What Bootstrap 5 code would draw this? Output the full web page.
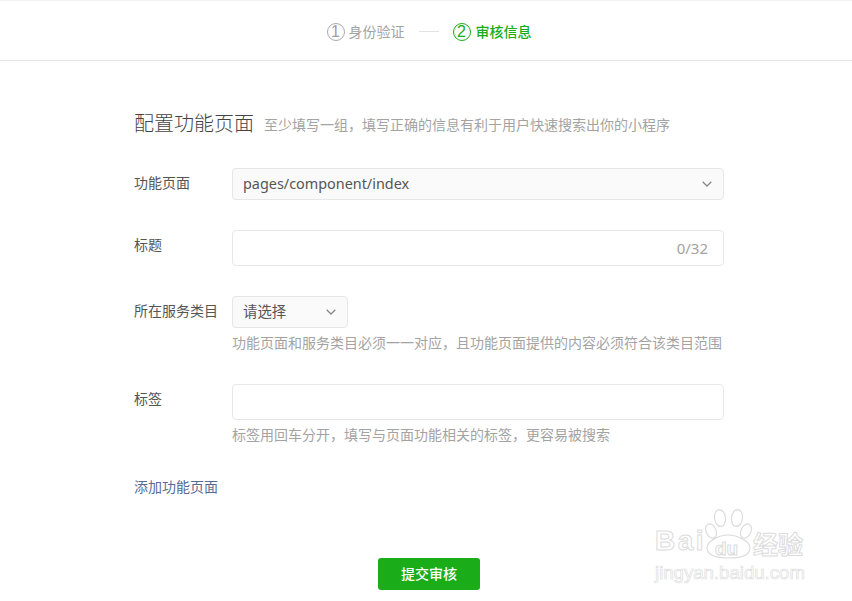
<!DOCTYPE html>
<html lang="zh-CN">
<head>
<meta charset="utf-8">
<title>配置功能页面</title>
<link rel="stylesheet" href="https://cdn.jsdelivr.net/npm/bootstrap@5.3.0/dist/css/bootstrap.min.css">
<style>
html,body{height:601px;overflow:hidden}
body{font-family:"Noto Sans","Noto Sans CJK SC",sans-serif;font-size:14px;color:#353535;background:#fff;position:relative}
.top-head{height:61px;border-top:1px solid #f2f2f2;border-bottom:1px solid #e7e7e7;padding-left:6px;padding-top:2px}
.step-no{width:18px;height:18px;border:1px solid #a9a9a9;border-radius:50%;font-size:16px;line-height:16px;text-align:center;color:#a0a0a0;margin-right:4px;font-family:"Liberation Sans",sans-serif}
.step-txt{color:#a3a3a3;font-size:14px;line-height:18px}
.step-line{width:20px;height:1px;background:#e2e2e2;margin:0 14px}
.step-on .step-no{border-color:#1aad19;color:#1aad19;margin-right:5px}
.step-on .step-txt{color:#1aad19;font-weight:500}
.page-wrap{width:590px;margin-left:134px}
.page-title{margin:0;padding-top:49px;height:107px;display:flex;align-items:flex-start;line-height:28px}
.page-title b{font-weight:300;font-size:20px;color:#444;margin-right:10px}
.page-title span{font-size:14px;font-weight:400;color:#a3a3a3;margin-top:1px}
.field-row{display:flex}
.field-name{width:98px;flex:none;line-height:20px;color:#555;font-size:14px}
.field-main{flex:1;min-width:0}
.pick,.entry{border:1px solid #e7e7e7;border-radius:4px;font-size:14px;color:#353535;box-shadow:none}
.pick.form-select{height:32px;padding:0 30px 0 10px;background-color:#fafafa;font-size:14.4px;line-height:30px;color:#555;font-family:"Noto Sans","Noto Sans CJK SC",sans-serif;background-size:10px 6px;background-position:right 11px center;background-image:url("data:image/svg+xml,%3Csvg xmlns='http://www.w3.org/2000/svg' viewBox='0 0 10 6'%3E%3Cpath d='M.7.7 5 5 9.3.7' fill='none' stroke='%23888' stroke-width='1.3'/%3E%3C/svg%3E")}
.pick-small{width:116px}
.entry.form-control{height:36px;padding:0 60px 0 10px}
.count-tag{position:absolute;right:16px;top:0;line-height:36px;color:#a3a3a3;font-size:15px}
.hint-line{color:#a3a3a3;font-size:14px;line-height:20px;margin-top:5px}
.r1{margin-top:0}.r2{margin-top:30px}.r3{margin-top:30px}.r4{margin-top:31px}
.name-a{padding-top:5px}.name-b{padding-top:5px}
.add-link{display:block;margin-top:32px;line-height:20px;color:#576b95;text-decoration:none;font-size:14px}
.submit-row{margin-top:61px;text-align:center}
.btn.go-btn{width:102px;height:32px;padding:0;background:#1aad19;border:0;border-radius:3px;color:#fff;font-size:14px;font-weight:500;line-height:32px}
.mark-box{position:absolute;left:653px;top:508px;width:155px;height:80px;color:#fff;pointer-events:none}
.mark-box svg{position:absolute;left:0;top:0}
.mark-txt{position:absolute;white-space:nowrap;color:#fff;-webkit-text-stroke:1px #dcdcdc;font-family:"Liberation Sans",sans-serif;line-height:1}
.m-bai{left:2px;top:19px;font-size:28px;font-weight:700;letter-spacing:2.5px}
.m-du{left:62px;top:31px;font-size:19px;font-weight:700;letter-spacing:0}
.m-jy{left:100px;top:23px;font-size:25px;font-family:"Noto Sans CJK SC",sans-serif;font-weight:700}
.m-url{left:2px;top:56px;font-size:18.6px;-webkit-text-stroke:.7px #dedede}
</style>
</head>
<body>
<header class="top-head d-flex align-items-center justify-content-center">
  <div class="d-flex align-items-center"><span class="step-no">1</span><span class="step-txt">身份验证</span></div>
  <div class="step-line"></div>
  <div class="d-flex align-items-center step-on"><span class="step-no">2</span><span class="step-txt">审核信息</span></div>
</header>
<main class="page-wrap">
  <h1 class="page-title"><b>配置功能页面</b><span>至少填写一组，填写正确的信息有利于用户快速搜索出你的小程序</span></h1>
  <div class="field-row r1">
    <div class="field-name name-a">功能页面</div>
    <div class="field-main"><select class="form-select pick"><option>pages/component/index</option></select></div>
  </div>
  <div class="field-row r2">
    <div class="field-name name-b">标题</div>
    <div class="field-main position-relative"><input class="form-control entry" type="text"><span class="count-tag">0/32</span></div>
  </div>
  <div class="field-row r3">
    <div class="field-name name-a">所在服务类目</div>
    <div class="field-main"><select class="form-select pick pick-small"><option>请选择</option></select>
      <div class="hint-line">功能页面和服务类目必须一一对应，且功能页面提供的内容必须符合该类目范围</div></div>
  </div>
  <div class="field-row r4">
    <div class="field-name name-b">标签</div>
    <div class="field-main"><input class="form-control entry" type="text">
      <div class="hint-line">标签用回车分开，填写与页面功能相关的标签，更容易被搜索</div></div>
  </div>
  <a class="add-link" href="#">添加功能页面</a>
  <div class="submit-row"><button class="btn go-btn" type="button">提交审核</button></div>
</main>
<div class="mark-box">
  <svg width="155" height="60" viewBox="0 0 155 60" fill="#fff" stroke="#dcdcdc" stroke-width="1.2">
    <ellipse cx="67" cy="10" rx="5.5" ry="8.5" transform="rotate(-8 67 10)"/>
    <ellipse cx="84" cy="10" rx="5.5" ry="8.5" transform="rotate(8 84 10)"/>
    <ellipse cx="58" cy="23" rx="5" ry="7.5" transform="rotate(-25 58 23)"/>
    <ellipse cx="93" cy="23" rx="5" ry="7.5" transform="rotate(25 93 23)"/>
    <path d="M54 40c0-7 12-13 21-13s22 6 22 13-8 10-21 10-22-3-22-10z"/>
  </svg>
  <span class="mark-txt m-bai">Bai</span>
  <span class="mark-txt m-du">du</span>
  <span class="mark-txt m-jy">经验</span>
  <span class="mark-txt m-url">jingyan.baidu.com</span>
</div>
</body>
</html>
